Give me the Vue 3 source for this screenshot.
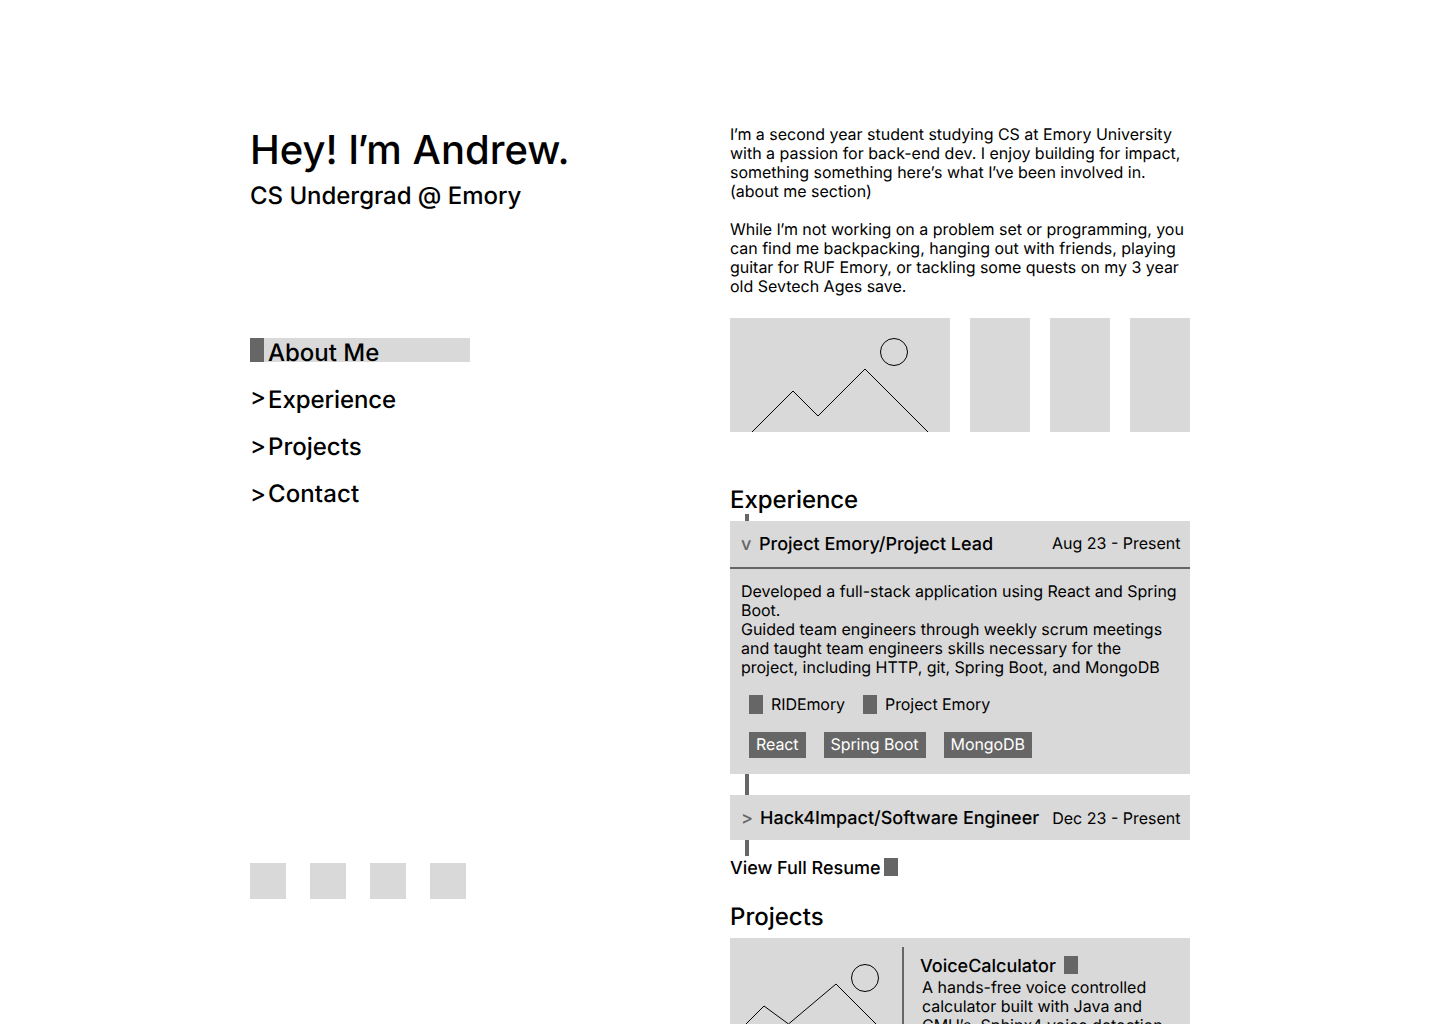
<script setup>
const photos = [1, 2, 3]
const links = ['Experience', 'Projects', 'Contact']
const skills = ['React', 'Spring Boot', 'MongoDB']
</script>

<template>
  <div class="page">
    <aside>
      <h1>Hey! I<span class="apos">’</span>m Andrew.</h1>
      <p class="role">CS Undergrad @ Emory</p>
      <nav>
        <a class="active"><i class="marker"></i><span>About Me</span></a>
        <a v-for="link in links" :key="link" :class="link.toLowerCase()"><b>&gt;</b><span>{{ link }}</span></a>
      </nav>
      <div class="social"><i v-for="n in 4" :key="n"></i></div>
    </aside>
    <main>
      <section class="about">
        <p>I<span class="apos">’</span>m a second year student studying CS at Emory University<br>with a passion for back-end dev. I enjoy building for impact,<br>something something here<span class="apos">’</span>s what I<span class="apos">’</span>ve been involved in.<br>(about me section)</p>
        <p><span class="tight">While I<span class="apos">’</span>m not working on a problem set or programming, you</span><br>can find me backpacking, hanging out with friends, playing<br>guitar for RUF Emory, or tackling some quests on my 3 year<br>old Sevtech Ages save.</p>
      </section>
      <div class="gallery">
        <svg width="220" height="114" viewBox="0 0 220 114"><path d="M22 114 63 73 88 98 135 51 198 114" /><circle cx="164" cy="34" r="13.5" /></svg>
        <i v-for="photo in photos" :key="photo"></i>
      </div>
      <h2 class="experience">Experience</h2>
      <div class="line first"></div>
      <article class="job">
        <header><b>v</b><h3>Project Emory/Project Lead</h3><time>Aug 23 - Present</time></header>
        <div class="details">
          <p>Developed a full-stack application using React and Spring<br>Boot.<br>Guided team engineers through weekly scrum meetings<br>and taught team engineers skills necessary for the<br>project, including HTTP, git, Spring Boot, and MongoDB</p>
          <div class="refs"><span><i></i>RIDEmory</span><span><i></i>Project Emory</span></div>
          <div class="skills"><span v-for="skill in skills" :key="skill">{{ skill }}</span></div>
        </div>
      </article>
      <div class="line middle"></div>
      <article class="job closed">
        <header><b>&gt;</b><h3>Hack4Impact/Software Engineer</h3><time>Dec 23 - Present</time></header>
      </article>
      <div class="line last"></div>
      <a class="resume"><span>View Full Resume</span><i></i></a>
      <h2 class="projects-title">Projects</h2>
      <article class="project">
        <svg width="172" height="114" viewBox="0 0 172 114"><path d="M-7 109 34 68 58.5 86 106 46 169 109" /><circle cx="135" cy="40" r="13.5" /></svg>
        <div class="project-text">
          <h3>VoiceCalculator<i></i></h3>
          <p>A hands-free voice controlled<br>calculator built with Java and<br>CMU<span class="apos">’</span>s, Sphinx4 voice detection</p>
        </div>
      </article>
    </main>
  </div>
</template>

<style>
body { margin: 0; }
</style>

<style scoped>
* { box-sizing: border-box; }
.page { width: 1440px; height: 1024px; overflow: hidden; display: flex; padding-left: 250px; background: #fff; color: #000; font: 16px/19px Inter, sans-serif; text-rendering: geometricPrecision; }
h1, h2, h3, p { margin: 0; font-weight: 500; }
aside { width: 480px; padding-top: 126px; }
h1 { font-size: 40px; line-height: 48px; white-space: nowrap; }
.apos { margin: 0 -.035em; }
h1 .apos { margin: 0 -.05em; }
.tight { letter-spacing: -.035px; }
p { font-weight: 400; white-space: nowrap; letter-spacing: -.015px; }
.role { font-size: 24px; line-height: 29px; margin-top: 7px; font-weight: 500; letter-spacing: -.04px; }
nav { margin-top: 128px; display: flex; flex-direction: column; gap: 23px; }
nav a { display: flex; width: 220px; height: 24px; font-size: 24px; line-height: 29px; font-weight: 500; }
nav .active { background: #d9d9d9; }
nav b { width: 18px; font-weight: 500; line-height: 28px; }
nav .experience b { line-height: 23px; }
nav .contact b { line-height: 30px; }
nav .contact { letter-spacing: .1px; }
.experience { letter-spacing: -.08px; }
.marker { width: 14px; height: 24px; margin-right: 4px; background: #666; }
.social { display: flex; gap: 24px; margin-top: 360px; }
.social i { width: 36px; height: 36px; background: #d9d9d9; }
main { width: 460px; padding-top: 125px; flex: none; }
.about p + p { margin-top: 19px; }
.gallery { display: flex; gap: 20px; margin-top: 22px; }
.gallery i { width: 60px; height: 114px; background: #d9d9d9; }
svg { display: block; background: #d9d9d9; flex: none; }
path, circle { fill: none; stroke: #000; stroke-width: 1; }
h2 { font-size: 24px; line-height: 29px; margin-top: 53px; }
.line { width: 4px; margin-left: 15px; background: #666; }
.first { height: 7px; }
.middle { height: 21px; }
.last { height: 16px; }
.job { background: #d9d9d9; height: 253px; }
header { height: 48px; padding: 0 9.5px 0 11px; border-bottom: 2px solid #666; display: flex; align-items: center; }
header b { width: 18px; font-size: 18px; font-weight: 500; color: #666; }
h3 { font-size: 18px; line-height: 22px; white-space: nowrap; }
header h3 { padding-top: 2px; }
time { margin-left: auto; margin-bottom: 2px; white-space: nowrap; }
.details { padding: 13px 11px; }
.details p { letter-spacing: -.025px; }
.refs { display: flex; gap: 18px; margin: 18px 0 0 8px; letter-spacing: -.08px; }
.refs span { display: flex; }
.refs i { width: 14px; height: 19px; background: #666; margin-right: 8px; }
.skills { display: flex; gap: 18px; margin: 18px 0 0 8px; letter-spacing: -.08px; }
.skills span { height: 26px; padding: 3px 7px; color: #fff; background: #666; }
.closed, .closed header { height: 45px; }
.closed header { border: 0; }
.closed b { width: 19px; padding-top: 1px; }
.closed time { margin: 2px 0 0 auto; }
.resume { display: flex; height: 22px; font-size: 18px; line-height: 25px; font-weight: 500; letter-spacing: -.04px; }
.resume i { width: 14px; height: 18px; margin: 2px 0 0 4px; background: #666; }
.projects-title { margin-top: 24px; }
.project { display: flex; height: 150px; margin-top: 7px; background: #d9d9d9; }
.project-text { margin-top: 9px; padding: 8px 0 0 16px; border-left: 2px solid #666; }
.project h3 { display: flex; height: 22px; line-height: 24px; }
.project h3 i { width: 14px; height: 18px; margin: 1px 0 0 8px; background: #666; }
.project p { padding: 1px 0 0 2px; }
</style>
